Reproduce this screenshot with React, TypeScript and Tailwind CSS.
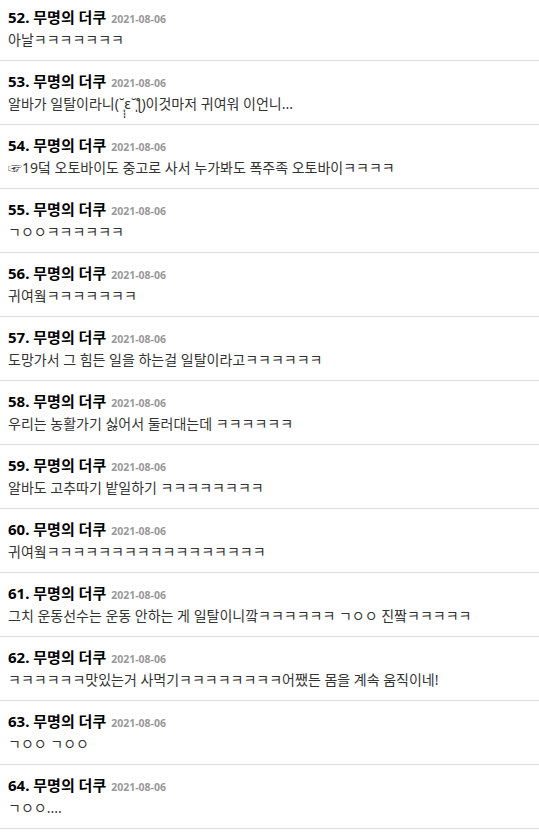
const comments: { no: number; text: string }[] = [
  { no: 52, text: '아날ㅋㅋㅋㅋㅋㅋㅋ' },
  { no: 53, text: '알바가 일탈이라니(˘̩̩̩ε˘̩ƪ)이것마저 귀여워 이언니...' },
  { no: 54, text: '☞19덬 오토바이도 중고로 사서 누가봐도 폭주족 오토바이ㅋㅋㅋㅋ' },
  { no: 55, text: 'ㄱㅇㅇㅋㅋㅋㅋㅋㅋ' },
  { no: 56, text: '귀여웤ㅋㅋㅋㅋㅋㅋㅋ' },
  { no: 57, text: '도망가서 그 힘든 일을 하는걸 일탈이라고ㅋㅋㅋㅋㅋㅋ' },
  { no: 58, text: '우리는 농활가기 싫어서 둘러대는데 ㅋㅋㅋㅋㅋㅋ' },
  { no: 59, text: '알바도 고추따기 밭일하기 ㅋㅋㅋㅋㅋㅋㅋㅋ' },
  { no: 60, text: '귀여웤ㅋㅋㅋㅋㅋㅋㅋㅋㅋㅋㅋㅋㅋㅋㅋㅋㅋ' },
  { no: 61, text: '그치 운동선수는 운동 안하는 게 일탈이니깤ㅋㅋㅋㅋㅋㅋ ㄱㅇㅇ 진짴ㅋㅋㅋㅋㅋ' },
  { no: 62, text: 'ㅋㅋㅋㅋㅋㅋ맛있는거 사먹기ㅋㅋㅋㅋㅋㅋㅋㅋ어쨌든 몸을 계속 움직이네!' },
  { no: 63, text: 'ㄱㅇㅇ ㄱㅇㅇ' },
  { no: 64, text: 'ㄱㅇㅇ....' },
];

function CommentRow({ no, text }: { no: number; text: string }) {
  return (
    <li className="flex h-[64px] flex-col border-b border-[#dddddd] px-2 pt-[10px]">
      <div className="flex h-[20px] items-baseline gap-[5px] leading-[20px]">
        <span className="text-[15px] font-bold text-black">{no}. 무명의 더쿠</span>
        <span className="text-[10.5px] font-bold text-[#999999]">2021-08-06</span>
      </div>
      <p className="mt-[3px] h-[20px] text-[14px] leading-[20px] text-[#333333]">{text}</p>
    </li>
  );
}

export default function App() {
  return (
    <div
      className="min-h-screen overflow-hidden bg-white"
      style={{ fontFamily: '"Noto Sans", "Noto Sans CJK KR", sans-serif' }}
    >
      {/* 스크롤된 목록: 첫 행이 살짝 잘려 있음 */}
      <ul className="-mt-[3px]">
        {comments.map((c) => (
          <CommentRow key={c.no} no={c.no} text={c.text} />
        ))}
      </ul>
    </div>
  );
}
